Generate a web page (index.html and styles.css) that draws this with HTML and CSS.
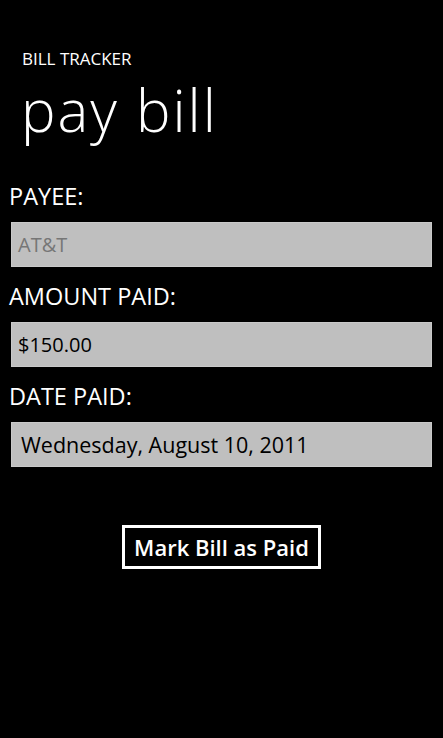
FILE: index.html
```html
<!DOCTYPE html>
<html lang="en">
<head>
  <meta charset="UTF-8">
  <meta name="viewport" content="width=device-width, initial-scale=1.0">
  <title>Bill Tracker - Pay Bill</title>
  <link rel="stylesheet" href="styles.css">
</head>
<body>

  <div class="title-panel">
    <div class="app-title">BILL TRACKER</div>
    <h1 class="page-title">pay bill</h1>
  </div>

  <div class="content-panel">
    <div class="field-label">PAYEE:</div>
    <div class="field-box field-disabled">AT&amp;T</div>

    <div class="field-label">AMOUNT PAID:</div>
    <div class="field-box">$150.00</div>

    <div class="field-label">DATE PAID:</div>
    <div class="field-box field-date">Wednesday, August 10, 2011</div>

    <div class="button-row">
      <button class="paid-button" id="paidButton">Mark Bill as Paid</button>
    </div>
  </div>

</body>
</html>
```

FILE: styles.css
```css
body {
  margin: 0;
  height: 738px;
  background-color: #000;
  color: #fff;
  font-family: "Open Sans", "Noto Sans", sans-serif;
}

.title-panel {
  padding: 47px 0 0 22px;
}

.app-title {
  font-size: 17px;
}

.page-title {
  margin: 0 0 0 -1px;
  font-size: 58px;
  font-weight: 350;
  letter-spacing: 2px;
}

.content-panel {
  padding: 31px 11px 0 11px;
}

.field-label {
  margin-left: -2px;
  font-size: 23.5px;
}

.field-box {
  height: 43px;
  margin: 10px 0 13px 0;
  padding: 0 6px;
  line-height: 43px;
  background-color: #bfbfbf;
  border: 1px solid #c9c9c9;
  color: #000;
  font-size: 20px;
}

.field-disabled {
  color: #767676;
}

.field-date {
  padding-left: 9px;
  font-size: 21.5px;
}

.button-row {
  display: flex;
  justify-content: center;
  margin-top: 58px;
}

.paid-button {
  width: 199px;
  height: 44px;
  padding: 0;
  background-color: #000;
  color: #fff;
  border: 3px solid #fff;
  font-family: "Open Sans", "Noto Sans", sans-serif;
  font-size: 22px;
  font-weight: 600;
}
```
